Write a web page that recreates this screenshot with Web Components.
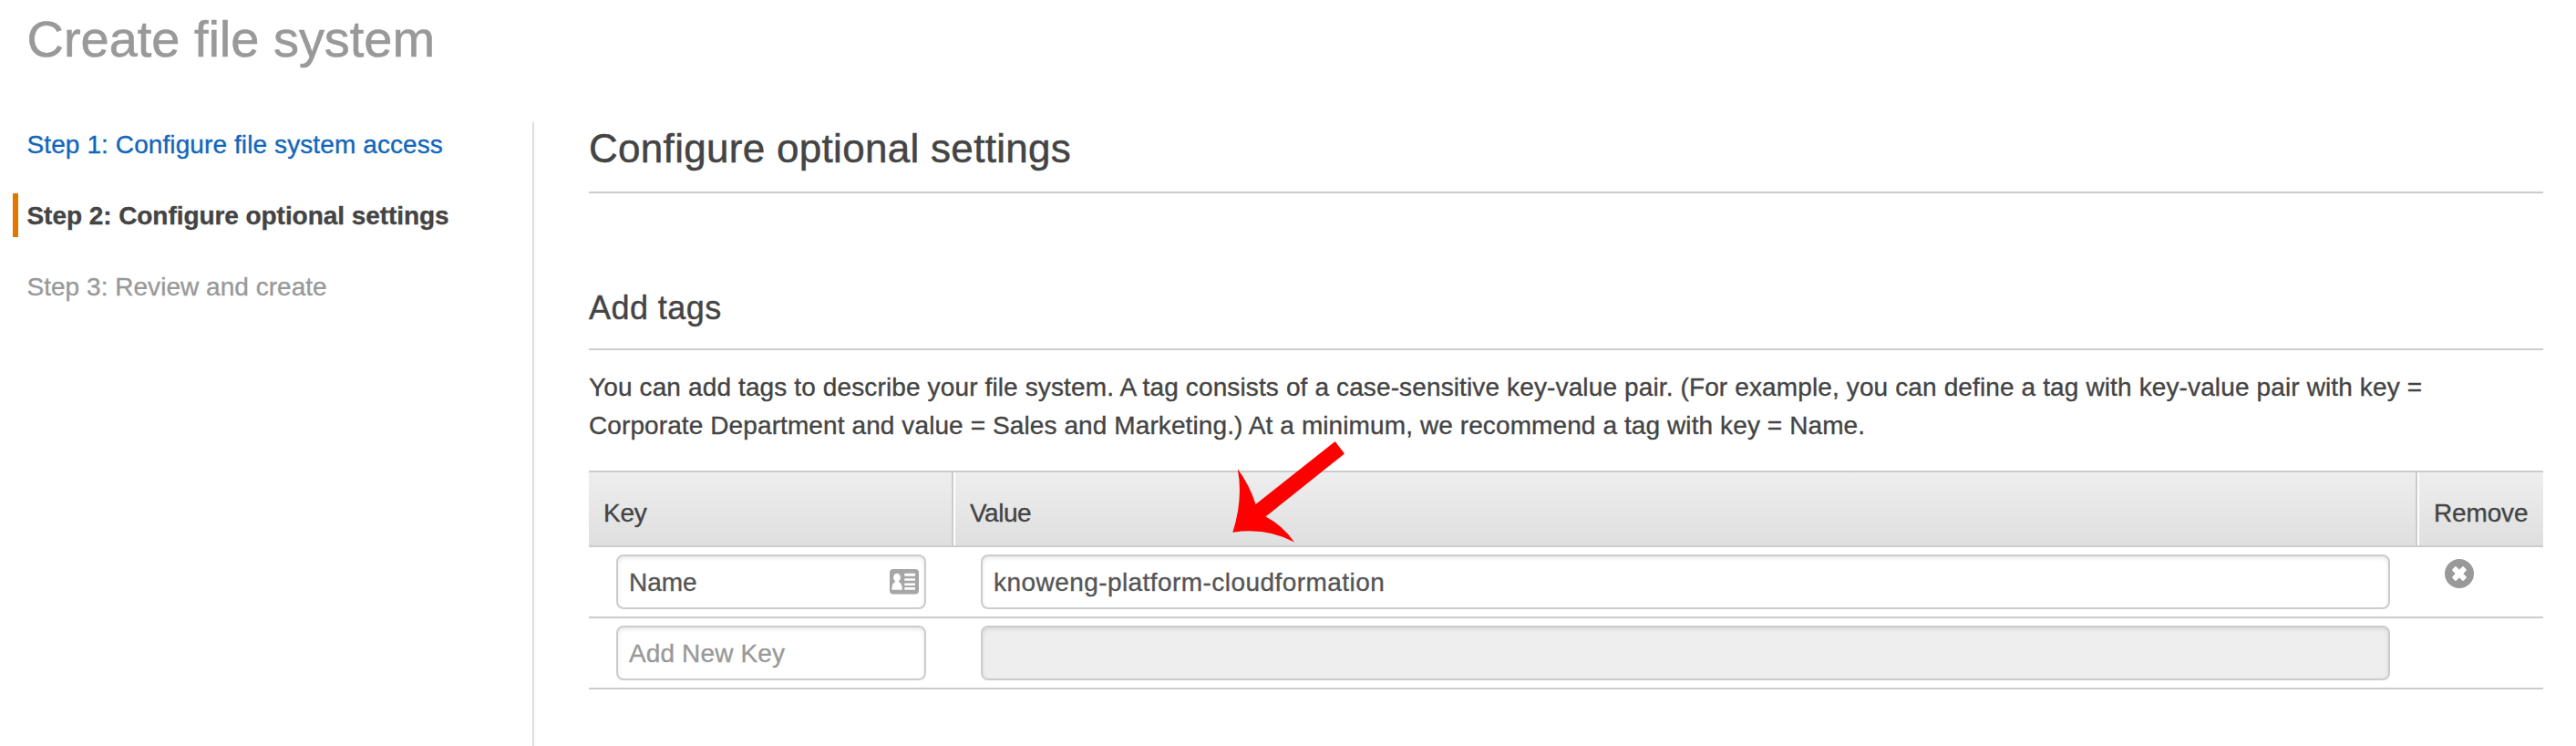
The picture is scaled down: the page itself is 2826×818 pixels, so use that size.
<!DOCTYPE html>
<html lang="en">
<head>
<meta charset="utf-8">
<title>Create file system</title>
<style>
html, body { margin: 0; height: 100%; overflow: hidden; background: #fff; }
body { font: 28px/31px "Liberation Sans", Arial, sans-serif; color: #444; -webkit-text-stroke: .35px currentColor; }
</style>
</head>
<body>
<wizard-page>
  <span slot="title">Create file system</span>
  <wizard-step slot="steps" state="link" style="letter-spacing:.1px">Step 1: Configure file system access</wizard-step>
  <wizard-step slot="steps" state="current" style="letter-spacing:-.06px">Step 2: Configure optional settings</wizard-step>
  <wizard-step slot="steps" state="todo" style="letter-spacing:.03px">Step 3: Review and create</wizard-step>
  <section-heading level="1">Configure optional settings</section-heading>
  <section-heading level="2">Add tags</section-heading>
  <text-block>
    <span style="letter-spacing:.128px">You can add tags to describe your file system. A tag consists of a case-sensitive key-value pair. (For example, you can define a tag with key-value pair with key =</span>
    <span style="letter-spacing:.1px">Corporate Department and value = Sales and Marketing.) At a minimum, we recommend a tag with key = Name.</span>
  </text-block>
  <tag-table>
    <tag-row>
      <text-field slot="key">Name<contact-icon slot="icon"></contact-icon></text-field>
      <text-field slot="value" style="letter-spacing:.44px">knoweng-platform-cloudformation</text-field>
      <remove-button slot="remove"></remove-button>
    </tag-row>
    <tag-row>
      <text-field slot="key" class="empty" style="letter-spacing:.13px">Add New Key</text-field>
      <text-field slot="value" disabled></text-field>
    </tag-row>
  </tag-table>
</wizard-page>

<script>
const define = (name, html) => {
  const template = document.createElement('template');
  template.innerHTML = html;
  customElements.define(name, class extends HTMLElement {
    constructor() {
      super();
      this.attachShadow({ mode: 'open' }).append(template.content.cloneNode(true));
    }
  });
};

define('wizard-page', `
<style>
:host { display: flex; flex-direction: column; height: 100%; }
h1 { box-sizing: border-box; margin: 0; padding: 11px 0 0 29.5px; height: 134px; flex: none; font-size: 56px; line-height: 63px; font-weight: 400; color: #999; letter-spacing: -.03px; -webkit-text-stroke-width: .6px; }
.body { flex: 1; display: grid; grid-template-columns: 586px 1fr; min-height: 0; }
nav { display: flex; flex-direction: column; gap: 30px; padding-left: 14px; border-right: 2px solid #ddd; }
main { padding: 0 36px 0 60px; }
</style>
<h1><slot name="title"></slot></h1>
<div class="body">
  <nav><slot name="steps"></slot></nav>
  <main><slot></slot><pointer-arrow></pointer-arrow></main>
</div>`);

define('wizard-step', `
<style>
:host { display: block; box-sizing: border-box; height: 48px; padding: 9px 0 0 9.5px; border-left: 6px solid transparent; white-space: nowrap; }
:host([state=link]) { color: #1166bb; }
:host([state=current]) { font-weight: 700; border-left-color: #e17700; }
:host([state=todo]) { color: #999; }
</style><slot></slot>`);

define('section-heading', `
<style>
:host { display: block; border-bottom: 2px solid #ccc; }
:host([level="1"]) { padding: 4px 0 23px; font-size: 44px; line-height: 49px; letter-spacing: .3px; -webkit-text-stroke-width: .5px; }
:host([level="2"]) { margin-top: 105px; padding-bottom: 24px; font-size: 36px; line-height: 41px; letter-spacing: .45px; -webkit-text-stroke-width: .4px; }
</style><slot></slot>`);

define('text-block', `
<style>
:host { display: flex; flex-direction: column; gap: 11px; margin: 25px 0 34px; white-space: nowrap; }
</style><slot></slot>`);

define('tag-table', `
<style>
:host { display: block; --cols: 400px 1fr 138px; }
.head { display: grid; grid-template-columns: var(--cols); height: 80px; border: solid #ccc; border-width: 2px 0; }
.head div { background: linear-gradient(#eee, #dfdfdf); padding: 29px 0 0 16px; }
.head div + div { border-left: 2px solid #fff; }
.head div:not(:last-child) { border-right: 2px solid #ccc; }
.k { letter-spacing: -.3px; } .v { letter-spacing: -.5px; } .r { letter-spacing: -.15px; }
</style>
<div class="head"><div class="k">Key</div><div class="v">Value</div><div class="r">Remove</div></div>
<slot></slot>`);

define('tag-row', `
<style>
:host { display: grid; grid-template-columns: var(--cols); height: 76px; border-bottom: 2px solid #ccc; }
div { padding: 8px 30px 0; }
.r { padding-top: 13px; padding-right: 0; }
</style>
<div><slot name="key"></slot></div><div><slot name="value"></slot></div><div class="r"><slot name="remove"></slot></div>`);

define('text-field', `
<style>
:host { display: flex; justify-content: space-between; box-sizing: border-box; height: 60px; padding: 13px 6px 0 12px; border: 2px solid #ccc; border-radius: 8px; background: #fff; color: #555; box-shadow: inset 0 2px 4px rgba(0,0,0,.1); }
:host(.empty) { color: #999; }
:host([disabled]) { background: #eee; }
</style>
<span><slot></slot></span><slot name="icon"></slot>`);

define('contact-icon', `
<style>:host { display: block; margin-top: 1px; width: 32px; height: 28px; } svg { display: block; }</style>
<svg width="32" height="28" viewBox="0 0 32 28">
  <rect width="32" height="27.5" rx="4" fill="#a6a6a6"/>
  <g fill="#fff">
    <ellipse cx="8" cy="9.2" rx="3.9" ry="4.5"/>
    <path d="M6.2 12.5h3.6v1.4c2.6.8 4 3.6 4 8.8H2.4c0-5.2 1.300-8 3.800-8.800z"/>
    <path d="M16.3 4.8H28v2.9H16.300zM16.300 10.300H28v2.500H16.300zM16.300 15.400H28v2.500H16.300zM16.300 20H28v2.700H16.300z"/>
  </g>
</svg>`);

define('remove-button', `
<style>:host { display: block; width: 32px; height: 32px; } svg { display: block; }</style>
<svg width="32" height="32" viewBox="-16 -16 32 32">
  <circle r="16" fill="#999"/>
  <g fill="#fff" transform="rotate(45)"><rect x="-8.800" y="-3.100" width="17.600" height="6.200" rx="1.500"/><rect x="-3.100" y="-8.800" width="6.200" height="17.600" rx="1.500"/></g>
</svg>`);

define('pointer-arrow', `
<style>:host { position: absolute; left: 1340px; top: 475px; width: 150px; height: 130px; } svg { display: block; }</style>
<svg width="150" height="130" viewBox="0 0 150 130">
  <path fill="#f00" d="M124.700 9L135 22.400L48.500 91.500Q67 101 80 119.600Q50 103 12.300 108.700Q24 72 17.800 39.200Q31 57 37.500 78Z"/>
</svg>`);
</script>
</body>
</html>
